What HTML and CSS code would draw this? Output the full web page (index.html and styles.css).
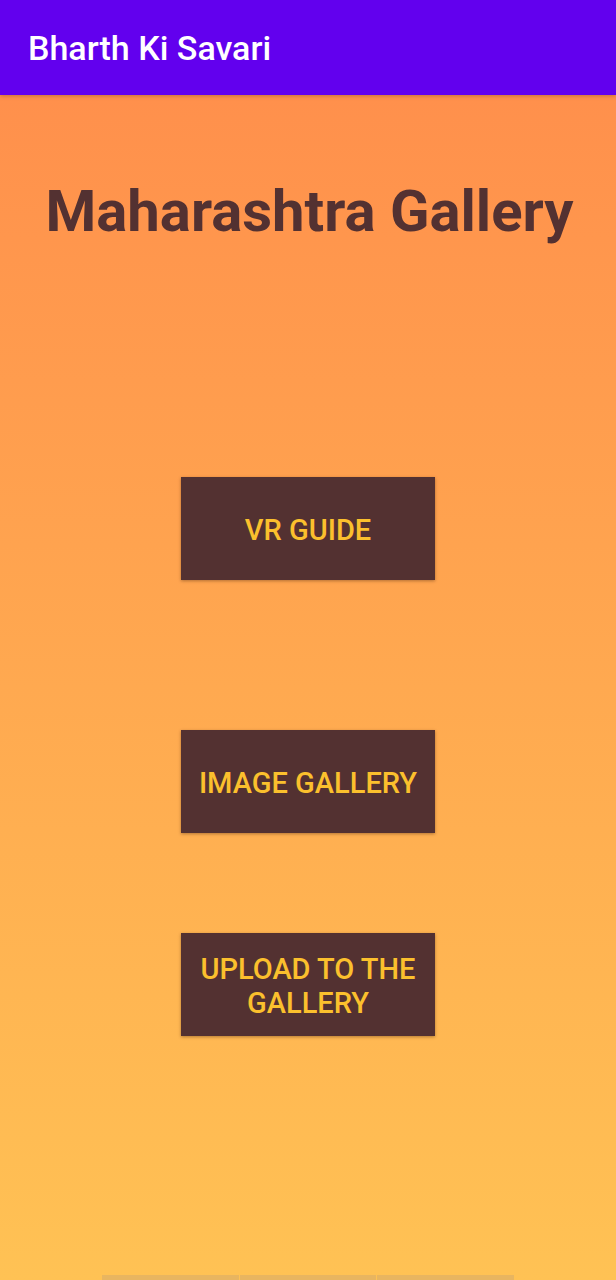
FILE: index.html
```html
<!DOCTYPE html>
<html lang="en">
<head>
<meta charset="utf-8">
<meta name="viewport" content="width=device-width, initial-scale=1">
<title>Bharth Ki Savari</title>
<link rel="stylesheet" href="styles.css">
</head>
<body>
<header class="app-bar">Bharth Ki Savari</header>
<main class="screen">
<h1 class="title">Maharashtra Gallery</h1>
<nav class="actions" aria-label="Gallery actions">
<button class="action action-guide" type="button">VR GUIDE</button>
<button class="action action-images" type="button">IMAGE GALLERY</button>
<button class="action" type="button">UPLOAD TO THE GALLERY</button>
</nav>
<div class="bottom-strip"><span></span><span></span><span></span></div>
</main>
</body>
</html>
```
FILE: styles.css
```css
* { box-sizing: border-box; }
body {
  margin: 0;
  min-height: 100vh;
  display: flex;
  flex-direction: column;
  font-family: Roboto, sans-serif;
}
.app-bar {
  z-index: 1;
  padding: 29px 28px 27px;
  background: #6200ee;
  box-shadow: 0 1px 4px rgb(90 50 30 / 35%);
  color: #fff;
  font-size: 34px;
  font-weight: 500;
  line-height: 39px;
}
.screen {
  flex: 1;
  display: flex;
  flex-direction: column;
  align-items: center;
  padding-top: 80px;
  background: linear-gradient(#ff904c, #ffc254);
}
.title {
  margin: 0 0 0 3px;
  color: #533131;
  font-size: 58px;
  line-height: 72px;
  font-weight: 700;
  text-align: center;
}
.actions {
  display: flex;
  flex-direction: column;
  align-items: center;
  padding-top: 230px;
}
.action {
  width: 254px;
  min-height: 103px;
  margin: 0;
  padding: 2px 8px 0;
  border: 0;
  background: #533131;
  color: #fbc02d;
  font: 500 29px/34px Roboto, sans-serif;
  box-shadow: 0 1px 3px rgb(60 30 10 / 40%);
}
.action-guide { margin-bottom: 150px; }
.action-images { margin-bottom: 100px; }
.bottom-strip {
  display: flex;
  gap: 1px;
  width: 67%;
  height: 5px;
  margin-top: auto;
}
.bottom-strip span { flex: 1; background: #e8b560; }
```
